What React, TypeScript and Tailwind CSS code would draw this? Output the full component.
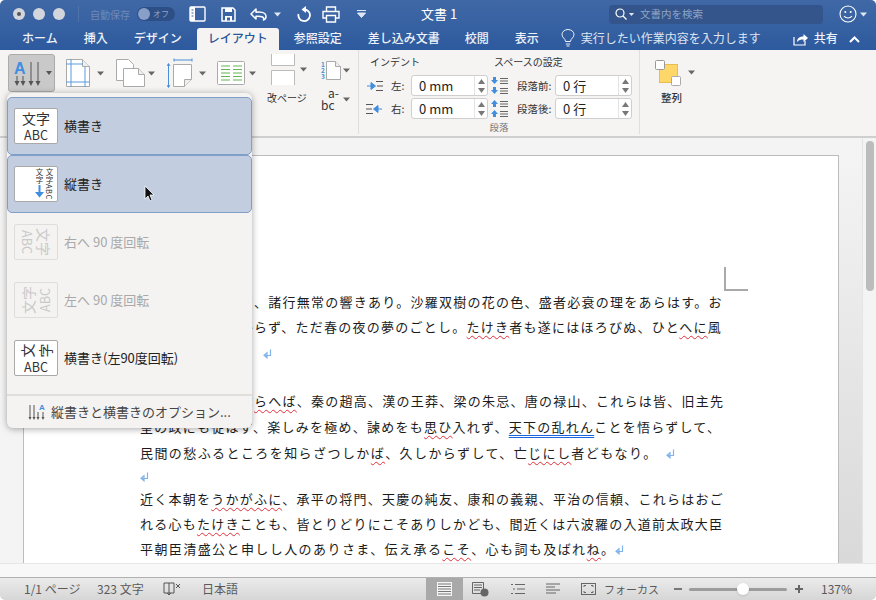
import React from "react";

const Caret = ({ c = "#666", cls = "" }: { c?: string; cls?: string }) => (
  <svg width="7" height="5" viewBox="0 0 7 5" className={cls}>
    <path d="M0 0.5h7L3.5 4.5z" fill={c} />
  </svg>
);

const R = ({ children, cls }: { children?: React.ReactNode; cls: string }) => (
  <span className={cls}>{children}</span>
);
const red = "underline decoration-wavy decoration-[#e0303a] decoration-1 underline-offset-[3px]";
const blue = "underline decoration-double decoration-[#1a66e0] decoration-1 underline-offset-[3px]";

const Para = ({ cls = "ml-[8px]" }: { cls?: string }) => (
  <svg width="9" height="10" viewBox="0 0 9 10" className={`inline-block align-[-1px] ${cls}`}>
    <path d="M7.5 0.5v6H2M4 3.8L1 6.3l3 2.5z" fill="none" stroke="#7fb3ea" strokeWidth="1.2" />
  </svg>
);

const Line = ({ cls, children }: { cls: string; children?: React.ReactNode }) => (
  <div className={`whitespace-nowrap text-[13px] text-[#1c1c1c] ${cls}`}>{children}</div>
);

const Spinner = () => (
  <div className="flex h-full w-[13px] flex-col items-center justify-center gap-[4px] border-l border-[#e3e3e3]">
    <svg width="7" height="5"><path d="M0 5h7L3.5 0z" fill="#777" /></svg>
    <svg width="7" height="5"><path d="M0 0h7L3.5 5z" fill="#777" /></svg>
  </div>
);

const Field = ({ v }: { v: string }) => (
  <div className="flex h-[21px] w-[77px] items-center justify-between rounded-[3px] border border-[#cfcfcf] bg-white pl-[7px] text-[13px] text-[#222]">
    <span>{v}</span>
    <Spinner />
  </div>
);

const ArrowLines = ({ right }: { right?: boolean }) => (
  <svg width="17" height="12" viewBox="0 0 17 12">
    {right ? (
      <>
        <path d="M0 1.5h7M0 6h6M0 10.5h7" stroke="#555" strokeWidth="1" />
        <path d="M16 6h-4v-3.5L7.5 6l4.500 3.500V6" fill="#3f8ee0" stroke="#3f8ee0" />
      </>
    ) : (
      <>
        <path d="M10 1.5h7M11 6h6M10 10.5h7" stroke="#555" strokeWidth="1" />
        <path d="M1 6h4v-3.500L9.500 6 5 9.500V6" fill="#3f8ee0" stroke="#3f8ee0" />
      </>
    )}
  </svg>
);

const SpaceIcon = ({ flip }: { flip?: boolean }) => (
  <svg width="18" height="19" viewBox="0 0 18 19">
    <path d={flip ? "M3.5 1L7 5H5v3H2V5H0z" : "M3.5 8L7 4H5V1H2v3H0z"} transform="translate(1,0)" fill="#3f8ee0" />
    <path d={flip ? "M3.5 11L7 15H5v3H2v-3H0z" : "M3.5 18L7 14H5v-3H2v3H0z"} transform="translate(1,0)" fill="#3f8ee0" />
    <path d="M10 2.5h8M10 5h8M10 7.5h8M10 12.5h8M10 15h8M10 17.5h8" stroke="#555" strokeWidth="0.9" />
  </svg>
);

const IconBox = ({ children, off, cls = "" }: { children: React.ReactNode; off?: boolean; cls?: string }) => (
  <div
    className={`flex h-[36px] w-[44px] shrink-0 flex-col items-center justify-center overflow-hidden rounded-[2px] border ${
      off ? "border-[#dddddd] text-[#c9c9c9]" : "border-[#a9a9a9] bg-white text-[#333]"
    } ${cls}`}
  >
    {children}
  </div>
);

const TextStack = () => (
  <>
    <span className="text-[14px] leading-[17px]">文字</span>
    <span className="text-[12.5px] leading-[15px]">ABC</span>
  </>
);

const Sel = "border border-[#7f9fc9] rounded-[5px] bg-[#c3cde0]";

export default function App() {
  return (
    <div className="relative flex h-[600px] w-[876px] flex-col overflow-hidden rounded-[5px] bg-white font-['Noto_Sans_CJK_JP',sans-serif]">
      {/* Title + tabs */}
      <div className="h-[50px] shrink-0 bg-linear-to-b from-[#4068a6] to-[#2d5a9e] text-white">
        <div className="flex h-[28px] items-center">
          <div className="ml-[13px] flex gap-[8px]">
            <div className="flex h-[12px] w-[12px] items-center justify-center rounded-full bg-[#d2d6dc]">
              <div className="h-[4px] w-[4px] rounded-full bg-[#555]" />
            </div>
            <div className="h-[12px] w-[12px] rounded-full bg-[#d2d6dc]" />
            <div className="h-[12px] w-[12px] rounded-full bg-[#d2d6dc]" />
          </div>
          <div className="ml-[13px] h-[16px] w-px bg-[#4f74ac]" />
          <span className="ml-[11px] w-[42px] whitespace-nowrap text-[10px] text-[#7089b5]">自動保存</span>
          <div className="ml-[5px] flex h-[14px] w-[38px] items-center rounded-full bg-[#2d4f85] pl-[1px]">
            <div className="h-[12px] w-[12px] rounded-full bg-[#88a0c9]" />
            <span className="ml-[3px] text-[8px] text-[#8ea6cc]">オフ</span>
          </div>
          {/* sidebar doc */}
          <svg width="17" height="16" viewBox="0 0 17 16" className="ml-[14px]">
            <rect x="1" y="1" width="15" height="14" rx="1" fill="none" stroke="#fff" strokeWidth="1.4" />
            <path d="M1 1h5v14H1z" fill="#fff" />
            <path d="M2.5 4h2M2.5 7h2M2.5 10h2" stroke="#3a62a0" />
          </svg>
          {/* save */}
          <svg width="15" height="15" viewBox="0 0 15 15" className="ml-[15px]">
            <path d="M1 1h11l2 2v11H1z" fill="none" stroke="#fff" strokeWidth="1.5" />
            <path d="M4 1h7v4H4zM4 9h7v5H4z" fill="#fff" />
            <path d="M6 10.5h3v3H6z" fill="#3a62a0" />
          </svg>
          {/* undo */}
          <svg width="18" height="13" viewBox="0 0 18 13" className="ml-[14px]">
            <path d="M1 6l5-5v3.200c3-.6 10-.4 10 4.300 0 1.600-1 3-2.500 3.500 1-2.500-1-4.200-7.500-3.800V11z" fill="none" stroke="#fff" strokeWidth="1.5" strokeLinejoin="round" />
          </svg>
          <Caret c="#dfe7f3" cls="ml-[6px]" />
          {/* redo */}
          <svg width="16" height="16" viewBox="0 0 16 16" className="ml-[15px]">
            <path d="M9 3.500A5.800 5.800 0 1 1 2.500 8" fill="none" stroke="#fff" strokeWidth="1.800" />
            <path d="M10 0v7L5.500 3.500z" fill="#fff" />
          </svg>
          {/* print */}
          <svg width="18" height="17" viewBox="0 0 18 17" className="ml-[10px]">
            <path d="M4.500 5V1h9v4M4 12H1V5.500h16V12h-3M4.500 9.500h9V16h-9z" fill="none" stroke="#fff" strokeWidth="1.4" />
          </svg>
          <svg width="9" height="8" viewBox="0 0 9 8" className="ml-[17px]">
            <path d="M0 .5h9M.5 3h8L4.500 7.500z" stroke="#dfe7f3" fill="#dfe7f3" strokeWidth="1" />
          </svg>
          <span className="ml-[55px] w-[40px] whitespace-nowrap text-[13px]">文書 1</span>
          <div className="ml-[148px] flex h-[19px] w-[214px] items-center rounded-[4px] bg-[#33558c] pl-[6px]">
            <svg width="12" height="12" viewBox="0 0 12 12">
              <circle cx="5" cy="5" r="4" fill="none" stroke="#fff" strokeWidth="1.2" />
              <path d="M8 8l3.500 3.500" stroke="#fff" strokeWidth="1.3" />
            </svg>
            <Caret c="#dfe7f3" cls="ml-[1px] scale-75" />
            <span className="ml-[5px] text-[10.5px] text-[#8ea3c6]">文書内を検索</span>
          </div>
          <svg width="18" height="18" viewBox="0 0 18 18" className="ml-[16px]">
            <circle cx="9" cy="9" r="8" fill="none" stroke="#fff" strokeWidth="1.100" />
            <circle cx="6.300" cy="7" r="1" fill="#fff" />
            <circle cx="11.700" cy="7" r="1" fill="#fff" />
            <path d="M5 11c2 2.700 6 2.700 8 0" fill="none" stroke="#fff" strokeWidth="1.100" />
          </svg>
          <Caret c="#dfe7f3" cls="ml-[3px]" />
        </div>
        <div className="flex h-[22px] items-end text-[12px] font-medium text-[#eef2f9]">
          <span className="ml-[22px] h-[21px] leading-[18px]">ホーム</span>
          <span className="ml-[26px] h-[21px] leading-[18px]">挿入</span>
          <span className="ml-[26px] h-[21px] leading-[18px]">デザイン</span>
          <span className="ml-[15px] flex h-[22px] w-[82px] items-center justify-center rounded-t-[3px] bg-[#f5f4f3] pb-[2px] text-[#2b5797]">レイアウト</span>
          <span className="ml-[15px] h-[21px] leading-[18px]">参照設定</span>
          <span className="ml-[26px] h-[21px] leading-[18px]">差し込み文書</span>
          <span className="ml-[25px] h-[21px] leading-[18px]">校閲</span>
          <span className="ml-[26px] h-[21px] leading-[18px]">表示</span>
          <svg width="14" height="18" viewBox="0 0 14 18" className="mb-[3px] ml-[22px]">
            <path d="M4.500 12.500C4.500 9.500 1 9 1 5.500a6 5 0 0 1 12 0c0 3.500-3.500 4-3.500 7zM4.800 15h4.400M5.500 17h3" fill="none" stroke="#eef2f9" strokeWidth="1" />
          </svg>
          <span className="ml-[6px] h-[21px] whitespace-nowrap font-normal leading-[18px] text-[#dfe5f0]">実行したい作業内容を入力します</span>
          <svg width="16" height="14" viewBox="0 0 16 14" className="mb-[4px] ml-[32px]">
            <path d="M1 5v8h11V9" fill="none" stroke="#fff" strokeWidth="1.200" />
            <path d="M4 10c0-4 3-5.500 6.500-5.500V2L15 6l-4.500 4V7.500C8 7.500 5.500 8 4 10z" fill="#fff" />
          </svg>
          <span className="ml-[5px] h-[21px] leading-[18px]">共有</span>
          <svg width="11" height="7" viewBox="0 0 11 7" className="mb-[7px] ml-[11px]">
            <path d="M1 6l4.500-4.500L10 6" fill="none" stroke="#fff" strokeWidth="2" />
          </svg>
        </div>
      </div>

      {/* Ribbon */}
      <div className="flex h-[88px] shrink-0 border-b-2 border-[#cfcfcf] bg-[#f5f4f3] text-[#333]">
        <div className="flex h-[84px] w-[359px] shrink-0 items-start border-r border-[#dedede] pl-[8px] pt-[4px]">
          <div className="flex h-[38px] w-[47px] shrink-0 items-center rounded-[3px] border border-[#ababab] bg-[#c9c9c9]">
            <svg width="45" height="36" viewBox="0 0 45 36">
              <text x="5" y="19" fontSize="16" fontWeight="700" fill="#3f8ee0" fontFamily="Liberation Sans">A</text>
              <path d="M8 21v7M14 21v7M22 7v21M29 7v21" stroke="#555" strokeWidth="1" />
              <path d="M5.500 26h5L8 31zM11.500 26h5L14 31zM19.500 26h5L22 31zM26.500 26h5L29 31z" fill="#555" />
              <path d="M37 16h6l-3 4z" fill="#555" />
            </svg>
          </div>
          {/* margins */}
          <div className="ml-[11px] mt-[5px] flex h-[28px] w-[50px] shrink-0 items-center">
            <svg width="24" height="28" viewBox="0 0 24 28">
              <path d="M.5.500h16l7 7v20H.5z" fill="#fff" stroke="#aaa" />
              <path d="M16.500.500v7h7" fill="#eee" stroke="#aaa" />
              <path d="M5 0v28M19 8v20M0 23h24M0 5h17" stroke="#5a9be0" strokeWidth="1" fill="none" />
            </svg>
            <Caret cls="ml-[7px]" />
          </div>
          {/* orientation */}
          <div className="mt-[5px] flex h-[28px] w-[51px] shrink-0 items-center">
            <svg width="29" height="28" viewBox="0 0 29 28">
              <path d="M.5.500h12l5 5v16H.5z" fill="#fff" stroke="#aaa" />
              <path d="M7.500 9.500h15l6 6v12h-21z" fill="#fff" stroke="#aaa" />
              <path d="M22.500 9.500v6h6" fill="#eee" stroke="#aaa" />
            </svg>
            <Caret cls="ml-[3px]" />
          </div>
          {/* size */}
          <div className="mt-[4px] flex h-[30px] w-[50px] shrink-0 items-center">
            <svg width="26" height="30" viewBox="0 0 26 30">
              <path d="M7 2h18M7 .5v3M25 .5v3" stroke="#4a8fd8" fill="none" />
              <path d="M1.500 6v23M0 8l1.500-2.500L3 8M0 27l1.500 2.500L3 27" stroke="#4a8fd8" fill="none" />
              <path d="M6.500 6.500h18v15l-7 7h-11z" fill="#fff" stroke="#aaa" />
              <path d="M24.500 21.500h-7v7" fill="#eee" stroke="#aaa" />
            </svg>
            <Caret cls="ml-[6px]" />
          </div>
          {/* columns */}
          <div className="mt-[7px] flex h-[24px] w-[50px] shrink-0 items-center">
            <svg width="28" height="24" viewBox="0 0 28 24">
              <rect x=".5" y=".5" width="27" height="23" rx="1" fill="#fff" stroke="#aaa" />
              <path d="M4 5h9M4 8.500h9M4 12h9M4 15.500h9M4 19h9M16 5h9M16 8.500h9M16 12h9M16 15.500h9M16 19h9" stroke="#62b84f" strokeWidth="1.200" />
            </svg>
            <Caret cls="ml-[4px]" />
          </div>
          {/* breaks */}
          <div className="flex w-[53px] shrink-0 flex-col">
            <div className="flex h-[31px] items-center pl-[4px]">
              <svg width="24" height="31" viewBox="0 0 24 31">
                <path d="M.5 0v11.500h23V0M.5 31V16.500h23V31" fill="#fff" stroke="#bbb" />
              </svg>
              <Caret cls="ml-[5px]" />
            </div>
            <span className="mt-[5px] whitespace-nowrap text-[10px] leading-[16px]">改ページ</span>
          </div>
          {/* numbers + hyphen */}
          <div className="flex shrink-0 flex-col pl-[1px]">
            <div className="mt-[6px] flex h-[20px] items-center">
              <span className="w-[4px] text-[6.500px] font-bold leading-[6px] text-[#4a8fd8]">1 2 3</span>
              <svg width="15" height="19" viewBox="0 0 15 19" className="ml-[1px]">
                <path d="M.5.500h9l5 5v13H.5z" fill="#fff" stroke="#aaa" />
                <path d="M9.500.500v5h5" fill="#eee" stroke="#aaa" />
              </svg>
              <Caret cls="ml-[2px]" />
            </div>
            <div className="mt-[7px] flex h-[24px] items-center">
              <span className="relative w-[20px] text-[12px] leading-[12px] text-[#333]">
                <span className="block pl-[7px]">a-</span>
                <span className="block">bc</span>
              </span>
              <Caret cls="ml-[2px]" />
            </div>
          </div>
        </div>

        {/* Paragraph */}
        <div className="flex h-[84px] w-[281px] shrink-0 flex-col border-r border-[#dedede]">
          <div className="flex h-[19px] items-end text-[10px] leading-[14px]">
            <span className="ml-[11px] w-[124px]">インデント</span>
            <span className="">スペースの設定</span>
          </div>
          <div className="mt-[6px] flex flex-col gap-[2px]">
            <div className="flex items-center text-[10.500px]">
              <div className="ml-[7px] w-[25px]"><ArrowLines /></div>
              <span className="w-[20px]">左:</span>
              <Field v="0 mm" />
              <div className="ml-[2px] w-[27px]"><SpaceIcon /></div>
              <span className="w-[38px] whitespace-nowrap">段落前:</span>
              <Field v="0 行" />
            </div>
            <div className="flex items-center text-[10.500px]">
              <div className="ml-[7px] w-[25px]"><ArrowLines right /></div>
              <span className="w-[20px]">右:</span>
              <Field v="0 mm" />
              <div className="ml-[2px] w-[27px]"><SpaceIcon flip /></div>
              <span className="w-[38px] whitespace-nowrap">段落後:</span>
              <Field v="0 行" />
            </div>
          </div>
          <span className="mt-[1px] text-center text-[9.500px] leading-[14px] text-[#777]">段落</span>
        </div>

        {/* Arrange */}
        <div className="flex w-[60px] flex-col pl-[15px] pt-[10px]">
          <div className="flex items-start">
            <svg width="26" height="26" viewBox="0 0 26 26">
              <rect x="4.500" y="4.500" width="18" height="18" fill="#ffd668" stroke="#e7bc50" />
              <rect x=".5" y=".5" width="9" height="9" rx="1" fill="#fff" stroke="#999" />
              <rect x="16.500" y="16.500" width="9" height="9" rx="1" fill="#fff" stroke="#aaa" />
            </svg>
            <Caret cls="ml-[7px] mt-[10px]" />
          </div>
          <span className="ml-[6px] mt-[5px] whitespace-nowrap text-[10.500px] font-medium leading-[14px]">整列</span>
        </div>
      </div>

      {/* Document */}
      <div className="flex h-[425px] shrink-0 bg-[#f4f4f4]">
        <div className="flex flex-1 overflow-hidden pl-[23px] pt-[17px]">
          <div className="relative h-[500px] w-[816px] shrink-0 border-l border-t border-r border-[#bcbcbc] bg-white pl-[116px] pt-[133px]">
            <div className="absolute left-[700px] top-[111px] h-[24px] w-[24px] border-b-2 border-l-2 border-[#a9a9a9]" />
            <Line cls="h-[25px] leading-[25px] tracking-[1.25px]">祇園精舎の鐘の声、諸行無常の響きあり。沙羅双樹の花の色、盛者必衰の理をあらはす。お</Line>
            <Line cls="h-[26px] leading-[26px] tracking-[1.25px]">ごれる人も久しからず、ただ春の夜の夢のごとし。<R cls={red}>たけき</R>者も遂にはほろびぬ、ひと<R cls={red}>へに</R>風</Line>
            <Line cls="h-[26px] leading-[26px] tracking-[1.42px]">の前の塵に同じ。<Para /></Line>
            <div className="h-[22px]" />
            <Line cls="h-[26px] leading-[26px] tracking-[1.25px]">　遠く異朝をとぶ<R cls={red}>らへば</R>、秦の趙高、漢の王莽、梁の朱忌、唐の禄山、これらは皆、旧主先</Line>
            <Line cls="h-[26px] leading-[26px] tracking-[1.25px]">皇の政にも従はず、楽しみを極め、諫めをも<R cls={red}>思ひ</R>入れず、<R cls={blue}>天下の乱れん</R>ことを悟らずして、</Line>
            <Line cls="h-[25px] leading-[25px] tracking-[1.42px]">民間の愁ふるところを知らざつしか<R cls={red}>ば</R>、久しからずして、亡<R cls={red}>じにし</R>者どもなり。<Para /></Line>
            <Line cls="h-[22px] leading-[22px]"><Para cls="ml-0" /></Line>
            <Line cls="h-[24px] leading-[24px] tracking-[1.25px]">近く本朝を<R cls={red}>うかがふに</R>、承平の将門、天慶の純友、康和の義親、平治の信頼、これらはおご</Line>
            <Line cls="h-[25px] leading-[25px] tracking-[1.25px]">れる心も<R cls={red}>たけき</R>ことも、皆とりどりにこそありしかども、間近くは六波羅の入道前太政大臣</Line>
            <Line cls="h-[25px] leading-[25px] tracking-[1.42px]">平朝臣清盛公と申しし人のありさま、伝え承る<R cls={red}>こそ</R>、心も詞も及ばれ<R cls={red}>ね</R>。<Para cls="ml-0" /></Line>
          </div>
          <div className="h-full flex-1 bg-linear-to-b from-[#f4f4f4] to-[#d9d9d9]" />
        </div>
        <div className="flex w-[14px] shrink-0 justify-center border-l border-[#e4e4e4] pt-[3px]">
          <div className="h-[150px] w-[8px] rounded-full bg-[#bcbcbc]" />
        </div>
      </div>
      <div className="h-[14px] shrink-0 border-t border-[#e6e6e6] bg-[#f8f8f8]" />

      {/* Status bar */}
      <div className="flex h-[23px] shrink-0 items-center border-t border-[#b0b0b0] bg-linear-to-b from-[#ebebeb] to-[#d6d6d6] text-[12px] text-[#5a5a5a]">
        <span className="ml-[24px] w-[73px] whitespace-nowrap">1/1 ページ</span>
        <span className="w-[66px] whitespace-nowrap">323 文字</span>
        <svg width="18" height="14" viewBox="0 0 18 14">
          <path d="M1 1h10v10H1zM6 1v12M4 11l2 2 2-2" fill="none" stroke="#555" />
          <path d="M13 2l4 4M17 2l-4 4" stroke="#555" />
        </svg>
        <span className="ml-[21px] w-[32px] whitespace-nowrap">日本語</span>
        <div className="ml-[192px] flex h-full w-[37px] items-center justify-center bg-[#a9a9a9]">
          <svg width="15" height="14" viewBox="0 0 15 14">
            <rect width="15" height="14" fill="#f5f5f5" />
            <path d="M1 2h13M1 4.500h13M1 7h13M1 9.500h13M1 12h13" stroke="#777" />
          </svg>
        </div>
        <svg width="17" height="15" viewBox="0 0 17 15" className="ml-[9px]">
          <path d="M.5.500h11v11H.5zM2 3h8M2 5.500h8M2 8h6" fill="none" stroke="#666" />
          <circle cx="12.500" cy="10.500" r="4" fill="#666" />
        </svg>
        <svg width="15" height="12" viewBox="0 0 15 12" className="ml-[22px]">
          <path d="M0 1.500h2M4 1.500h10M2 6h2M6 6h8M0 10.500h2M4 10.500h10" stroke="#666" />
        </svg>
        <svg width="14" height="12" viewBox="0 0 14 12" className="ml-[20px]">
          <path d="M0 1h14M0 4h9M0 7h14M0 10h10" stroke="#666" />
        </svg>
        <svg width="15" height="12" viewBox="0 0 15 12" className="ml-[21px]">
          <rect x=".5" y=".5" width="14" height="11" fill="none" stroke="#666" />
          <path d="M3 4V2.500h2M12 4V2.500h-2M3 8v1.500h2M12 8v1.500h-2" fill="none" stroke="#666" />
        </svg>
        <span className="ml-[8px] w-[53px] whitespace-nowrap text-[11px]">フォーカス</span>
        <div className="ml-[17px] h-[2px] w-[8px] bg-[#777]" />
        <div className="relative ml-[7px] flex h-[3px] w-[98px] rounded-full bg-[#9c9c9c]">
          <div className="absolute left-[48px] top-[-5px] h-[12px] w-[12px] rounded-full bg-white shadow-sm" />
        </div>
        <svg width="8" height="8" viewBox="0 0 8 8" className="ml-[8px]">
          <path d="M0 4h8M4 0v8" stroke="#666" strokeWidth="2" />
        </svg>
        <span className="ml-[18px]">137%</span>
      </div>

      {/* Menu */}
      <div className="absolute left-[7px] top-[93px] flex h-[335px] w-[245px] flex-col rounded-[6px] bg-[#f4f3f2] pt-[4px] shadow-[0_1px_7px_rgba(0,0,0,0.35)]">
        <div className={`flex h-[58px] shrink-0 items-center pl-[6px] text-[13px] text-[#222] ${Sel}`}>
          <IconBox><TextStack /></IconBox>
          <span className="ml-[6px]">横書き</span>
        </div>
        <div className={`flex h-[58px] shrink-0 items-center pl-[6px] text-[13px] text-[#222] ${Sel}`}>
          <IconBox cls="!flex-row !items-start !justify-end pr-[3px] pt-[1px] text-[7.5px] leading-[9px]">
            <div className="flex w-[9px] flex-col items-center">
              <span className="whitespace-nowrap tracking-[0.5px] [writing-mode:vertical-rl]">文字</span>
              <svg width="9" height="13" viewBox="0 0 9 13" className="mt-[1px]">
                <path d="M4.500 0v9" stroke="#3f8ee0" strokeWidth="2" />
                <path d="M0 7h9l-4.500 5.500z" fill="#3f8ee0" />
              </svg>
            </div>
            <span className="ml-[1px] whitespace-nowrap tracking-[0.5px] [writing-mode:vertical-rl]">文字ABC</span>
          </IconBox>
          <span className="ml-[6px]">縦書き</span>
        </div>
        <div className="flex h-[58px] shrink-0 items-center pl-[7px] text-[13px] text-[#a9a9a9]">
          <IconBox off>
            <div className="flex h-[44px] w-[34px] shrink-0 rotate-90 flex-col items-center justify-center"><TextStack /></div>
          </IconBox>
          <span className="ml-[6px]">右へ 90 度回転</span>
        </div>
        <div className="flex h-[58px] shrink-0 items-center pl-[7px] text-[13px] text-[#a9a9a9]">
          <IconBox off>
            <div className="flex h-[44px] w-[34px] shrink-0 -rotate-90 flex-col items-center justify-center"><TextStack /></div>
          </IconBox>
          <span className="ml-[6px]">左へ 90 度回転</span>
        </div>
        <div className="flex h-[58px] shrink-0 items-center pl-[7px] text-[13px] text-[#222]">
          <IconBox>
            <span className="flex h-[17px] gap-[4px] text-[14px] leading-[17px]">
              <span className="-rotate-90">文</span>
              <span className="-rotate-90">字</span>
            </span>
            <span className="text-[12.500px] leading-[15px]">ABC</span>
          </IconBox>
          <span className="ml-[6px]">横書き(左90度回転)</span>
        </div>
        <div className="mt-[7px] flex flex-1 items-center border-t-2 border-[#dfdedd] pl-[21px] text-[13px] text-[#444]">
          <svg width="19" height="18" viewBox="0 0 19 18">
            <text x="11" y="7" fontSize="8" fontWeight="700" fill="#3f8ee0" fontFamily="Liberation Sans">A</text>
            <path d="M2 2v13M6 2v13M10 9v6M15 9v6" stroke="#555" />
            <path d="M.5 14h3L2 17zM4.500 14h3L6 17zM8.500 14h3L10 17zM13.500 14h3L15 17z" fill="#555" />
          </svg>
          <span className="ml-[4px] whitespace-nowrap">縦書きと横書きのオプション...</span>
        </div>
      </div>

      {/* Mouse pointer */}
      <svg width="12" height="18" viewBox="0 0 12 18" className="absolute left-[144px] top-[185px]">
        <path d="M1 1v13l3-3 2 5 2-1-2-5h4z" fill="#111" stroke="#fff" strokeWidth="0.8" />
      </svg>
    </div>
  );
}
